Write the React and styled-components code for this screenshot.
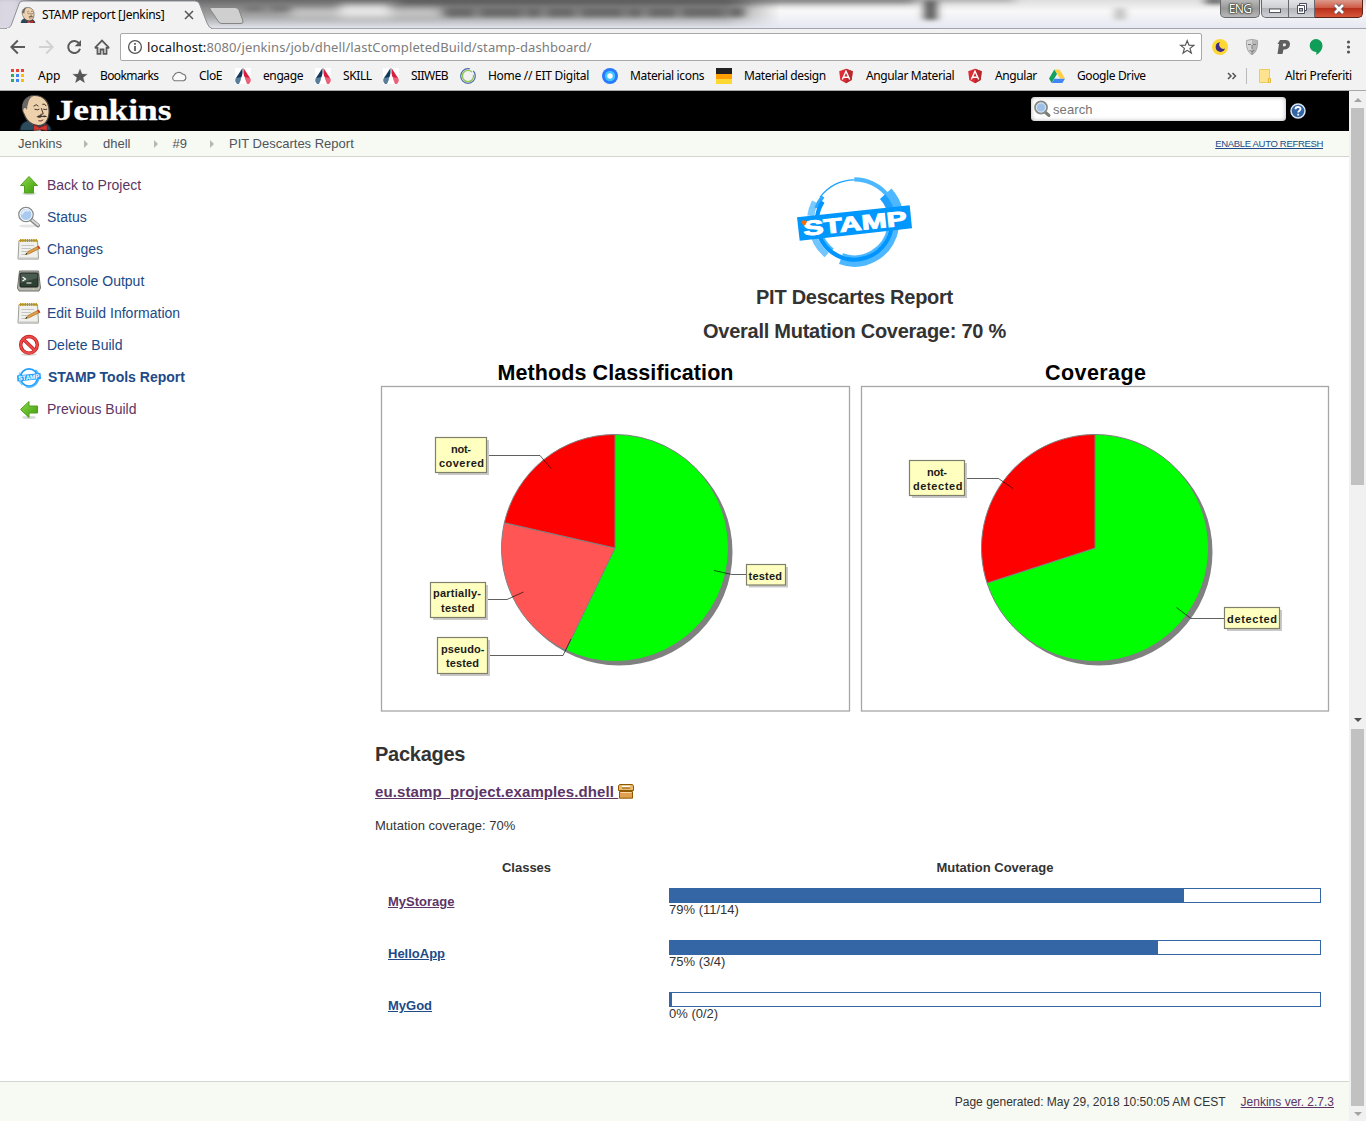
import React from 'react';
import styled, { createGlobalStyle } from 'styled-components';

const Global = createGlobalStyle`
  * { box-sizing: border-box; }
  html, body { margin: 0; padding: 0; }
  body {
    width: 1366px; height: 1121px; overflow: hidden; background: #fff; color: #333;
    font-family: "Liberation Sans", Arial, sans-serif; font-size: 13px;
  }
  svg { display: block; flex: none; }
`;

/* ---------- helpers ---------- */
const pt = (cx, cy, r, deg) => {
  const a = (deg * Math.PI) / 180;
  return [cx + r * Math.sin(a), cy - r * Math.cos(a)];
};
const arc = (cx, cy, r, a0, a1) => {
  const [x0, y0] = pt(cx, cy, r, a0);
  const [x1, y1] = pt(cx, cy, r, a1);
  return `M${x0} ${y0}A${r} ${r} 0 ${a1 - a0 > 180 ? 1 : 0} 1 ${x1} ${y1}`;
};

/* ---------- layout ---------- */
const Window = styled.div`
  display: flex; flex-direction: column; width: 1366px; height: 1121px;
`;
const UiFont = '"Noto Sans", "Open Sans", sans-serif';

const TitleBar = styled.div`
  position: relative; display: flex; height: 29px; padding-left: 6px;
  border-bottom: 1px solid #a2a4ae; background: #d8d9df;
`;
const Glass = styled.svg`
  position: absolute; left: 0; top: 0;
`;
const Tab = styled.div`
  position: relative; display: flex; align-items: center; width: 206px; height: 29px;
  padding: 0 0 0 14px; font-family: ${UiFont}; color: #000;
`;
const TabShape = styled.svg`
  position: absolute; left: 0; top: 0;
`;
const TabTitle = styled.span`
  position: relative; width: 140px; margin-left: 6px; font-size: 12px; white-space: nowrap;
  letter-spacing: ${(p) => p.$ls}px;
`;
const Above = styled.span`
  position: relative; display: flex;
`;
const WindowButtons = styled.div`
  position: relative; display: flex; margin-left: auto; padding-right: 3px; height: 18px;
`;
const Lang = styled.div`
  display: flex; align-items: center; justify-content: center; width: 40px; height: 18px; margin-right: 1px;
  border: 1px solid #66686a; border-top: 0; border-radius: 0 0 5px 5px;
  background: linear-gradient(#b9b9b9, #989898 50%, #b9b9b9); color: #fff;
  font: 12px ${UiFont}; letter-spacing: -0.7px; text-shadow: 0 0 2px #222, 0 0 2px #222, 0 0 1px #222;
`;
const WinBtn = styled.div`
  display: flex; align-items: center; justify-content: center; width: ${(p) => p.$w}px; height: 18px;
  border: 1px solid ${(p) => (p.$close ? '#5b2016' : '#66686e')}; border-top: 0; border-left-width: ${(p) => (p.$first ? 1 : 0)}px;
  border-radius: 0 0 ${(p) => (p.$close ? 5 : 0)}px ${(p) => (p.$first ? 5 : 0)}px;
  background: ${(p) => (p.$close
    ? 'linear-gradient(#dd9a8c, #cf5b45 45%, #b8301a 50%, #d8553a)'
    : 'linear-gradient(#e2e3e6, #cfd0d4 45%, #b3b4b9 50%, #d2d3d8)')};
`;

const Toolbar = styled.div`
  display: flex; align-items: center; height: 36px; padding: 0 0 0 10px; background: #f2f2f2;
`;
const NavIcons = styled.div`
  display: flex; gap: 12px; width: 110px;
`;
const Address = styled.div`
  display: flex; align-items: center; width: 1082px; height: 28px; padding: 0 6px;
  border: 1px solid #a9a9a9; border-radius: 2px; background: #fff; font-family: ${UiFont};
`;
const Url = styled.span`
  flex: 1; margin-left: 4px; font-size: 13px; color: #7c7c7c; letter-spacing: ${(p) => p.$ls}px; white-space: nowrap;
  b { font-weight: 400; color: #111; }
`;
const Extensions = styled.div`
  display: flex; align-items: center; gap: 16px; padding-left: 10px;
`;

const Bookmarks = styled.div`
  display: flex; align-items: center; height: 26px; padding: 0 0 4px 10px; background: #f2f2f2;
  border-bottom: 1px solid #a8a8a8; font: 12px ${UiFont}; color: #000;
`;
const Bookmark = styled.div`
  display: flex; align-items: center; gap: 12px; flex: none; width: ${(p) => p.$w}px; white-space: nowrap;
  letter-spacing: ${(p) => p.$ls}px;
`;
const Overflow = styled.span`
  width: 19px; margin-left: 61px;
`;
const Divider = styled.i`
  width: 1px; height: 16px; margin-right: 10px; background: #b9b9b9;
`;

const Viewport = styled.div`
  display: flex; flex: 1; height: 1030px;
`;
const Page = styled.div`
  display: flex; flex-direction: column; width: 1349px;
`;
const Header = styled.header`
  display: flex; justify-content: space-between; height: 40px; padding: 0 43px 0 18px; background: #000;
`;
const SearchArea = styled.div`
  display: flex; align-items: center; gap: 4px; padding-bottom: 4px;
`;
const SearchBox = styled.div`
  display: flex; align-items: center; width: 255px; height: 24px; padding-left: 2px;
  border-radius: 4px; background: #fff; box-shadow: inset 0 0 4px #aaa;
  color: #757575; font-size: 13px; letter-spacing: 0.1px;
`;
const Help = styled.span`
  padding-top: 3px;
`;
const Crumbs = styled.nav`
  display: flex; align-items: center; height: 26px; padding: 0 26px 1px 18px; background: #f6faf2;
  border-bottom: 1px solid #d3d7cf; font-size: 13px; color: #4d545d;
`;
const Crumb = styled.span`
  flex: none; width: ${(p) => p.$w}px; white-space: nowrap; letter-spacing: ${(p) => p.$ls || 0}px;
`;
const CrumbArrow = styled.i`
  width: 0; height: 0; margin: 1px 15px 0 0; border: 4px solid transparent; border-left-color: #b5b8b2; border-right-width: 0;
`;
const Refresh = styled.a`
  margin: 1px 0 0 auto; font-size: 9.5px; color: #204a87; text-decoration: underline; letter-spacing: ${(p) => p.$ls}px;
`;

const Body = styled.div`
  display: flex; flex: 1;
`;
const Side = styled.aside`
  display: flex; flex-direction: column; width: 375px; padding: 12px 0 0 17px;
`;
const Task = styled.a`
  display: flex; align-items: center; gap: ${(p) => (p.$active ? 7 : 6)}px; height: 32px; font-size: 14px;
  color: ${(p) => (p.$visited ? '#5c3566' : '#204a87')};
  font-weight: ${(p) => (p.$active ? 700 : 400)}; letter-spacing: ${(p) => p.$ls || 0}px;
`;
const Main = styled.main`
  display: flex; flex-direction: column; width: 960px; padding-top: 19px;
`;
const Brand = styled.div`
  display: flex; justify-content: center; height: 104px; padding-right: 1px;
`;
const Heading = styled.h2`
  margin: 0; height: 34px; line-height: 34px; font-size: 20px; text-align: ${(p) => (p.$left ? 'left' : 'center')};
  letter-spacing: -0.27px; padding-right: 1px;
`;
const Charts = styled.div`
  display: flex; height: 389px; padding-top: 7px;
`;
const PackageLink = styled.a`
  display: flex; align-items: center; height: 16px; margin-top: 12px; font-size: 15px; font-weight: 700; color: #5c3566;
  span { text-decoration: underline; letter-spacing: ${(p) => p.$ls}px; white-space: pre; }
`;
const Note = styled.p`
  margin: 19px 0 0; height: 16px; line-height: 16px; font-size: 13px; letter-spacing: ${(p) => p.$ls}px;
`;
const Table = styled.div`
  display: flex; flex-direction: column; padding-top: 26px;
`;
const Row = styled.div`
  display: grid; grid-template-columns: 281px 652px; padding-left: 13px; height: ${(p) => (p.$head ? 28 : 52)}px;
`;
const HeadCell = styled.b`
  line-height: 16px; text-align: center; letter-spacing: ${(p) => p.$ls}px; padding-right: ${(p) => p.$pr || 0}px;
`;
const ClassName = styled.a`
  padding-top: 6px; line-height: 15px; font-weight: 700; text-decoration: underline; color: ${(p) => (p.$visited ? '#5c3566' : '#204a87')};
  letter-spacing: ${(p) => p.$ls || 0}px;
`;
const Track = styled.div`
  height: 15px; border: 1px solid #3465a4; background: #fff;
`;
const Fill = styled.div`
  height: 13px; min-width: 2px; background: #3465a4;
`;
const Ratio = styled.div`
  height: 14px; line-height: 14px; letter-spacing: ${(p) => p.$ls || 0}px;
`;
const Footer = styled.footer`
  display: flex; justify-content: flex-end; align-items: center; gap: 15px; height: 40px; padding-right: 15px;
  border-top: 1px solid #d3d7cf; background: #f6faf2; font-size: 12px;
  a { color: #5c3566; text-decoration: underline; }
`;

const ScrollRail = styled.div`
  display: flex; flex-direction: column; align-items: center; width: 17px; background: #f1f1f1;
`;
const Thumb = styled.div`
  width: 13px; height: 377px; background: #c1c1c1;
`;
const ScrollArrow = styled.div`
  display: flex; align-items: center; justify-content: center; height: ${(p) => p.$h}px;
  &::after {
    content: ''; border: 4px solid transparent;
    ${(p) => (p.$up ? `border-bottom-color: ${p.$c}; border-top-width: 0;` : `border-top-color: ${p.$c}; border-bottom-width: 0;`)}
  }
`;
const RailGap = styled.div`
  height: 225px;
`;

/* ---------- drawings ---------- */
const Butler = ({ w, h, light }) => (
  <svg width={w} height={h} viewBox="0 0 34 37">
    <path d="M1 37 C1 31 5 28 9 27 L25 28 C30 30 33 33 33 37Z" fill="#2b4a5c" stroke="#0d1a22" strokeWidth="1" />
    <path d="M4 17 C2 8 7 1 16 1 C26 1 31 8 31 17 C31 26 27 32 20 32 C13 32 8 27 6 22Z" fill="#edd0ac" stroke={light ? '#333' : '#4a4440'} strokeWidth="1.2" />
    <path d="M4 17 C2 8 7 2 15 1.5 C9 4 10 9 8.500 12 C9 15 7 17 6.500 18 C4.500 19 4 19 4 17Z" fill="#6a6766" />
    <path d="M7 14 C3 13 4 20 8 21 L9 25 L11 20Z" fill="#edd0ac" />
    <path d="M15 12q3-3 5 0M24 10q3-1 4 2M16 15q3 1.500 5 0M25 15q2 1 4 0M23 14l2 6-3 .5" fill="none" stroke="#3b2d27" strokeWidth="1" />
    <path d="M18 23q4-3 6-1 3-1 5 1-3 1-5 0-3 2-6 0Z" fill="#38322e" />
    <path d="M20 27q3 1 5-1" stroke="#6b2a20" fill="none" />
    <path d="M15 37 L19 33 L23 37Z" fill="#fff" />
    <path d="M15 31l6 3 8-3v6l-8-1-6 1Z" fill="#d33833" stroke="#7b1512" strokeWidth=".8" />
  </svg>
);

const Wordmark = () => (
  <svg width="160" height="40" viewBox="0 0 160 40">
    <text x="37.500" y="28.500" fill="#fff" fontFamily='"Liberation Serif", serif' fontWeight="700" fontSize="30" textLength="116" lengthAdjust="spacingAndGlyphs" stroke="#fff" strokeWidth=".3">Jenkins</text>
  </svg>
);
const LogoRow = styled.div`
  display: flex; width: 160px;
`;
const ButlerSlot = styled.div`
  width: 34px; height: 40px; padding: 3px 0 0 1px;
  & + svg { margin-left: -34px; }
`;

const StampLogo = () => {
  const c = [854.3, 222];
  const p = (r, a, b) => arc(c[0], c[1], r, a, b);
  return (
    <svg width="115" height="92" viewBox="797 176 115 92" fill="none">
      <g stroke="#4db8ff">
        <path d={p(42.6, 0, 110)} strokeWidth="4.2" />
        <path d={p(41.8, 100, 200)} strokeWidth="6" />
        <path d={p(44, 278, 297)} strokeWidth="7" strokeOpacity=".75" />
        <path d={p(43, 220, 262)} strokeWidth="6" strokeOpacity=".8" />
        <path d={p(46.5, 48, 74)} strokeWidth="7" />
        <path d={p(34.5, 100, 200)} strokeWidth="2.4" />
        <path d={p(35, 218, 245)} strokeWidth="3" />
      </g>
      <path d={p(42.2, 306, 360)} stroke="#19a3ff" strokeWidth="1.2" />
      <path d={p(38, 48, 80)} stroke="#1e9fff" strokeWidth="7" />
      <path d={p(40.5, 290, 309)} stroke="#2fa9ff" strokeWidth="4" />
      <path d={p(37.6, 75, 303)} stroke="#0095ff" strokeWidth="4.2" />
      <path d="M797 217.3L909.7 205.3 912 228.3 799.7 240.7Z" fill="#0098ff" />
      <g transform="translate(804 235.8) rotate(-5.900)">
        <text x="0" y="0" fill="#fff" stroke="#fff" strokeWidth="1" fontFamily='"Liberation Sans", Arial, sans-serif' fontWeight="700" fontSize="20.500" textLength="104" lengthAdjust="spacingAndGlyphs">STAMP</text>
      </g>
      <path d="M801 221l4-.8 2 1.600-2 3.600-2-.5Z" fill="#ff6a00" />
    </svg>
  );
};
const StampIcon = () => (
  <svg width="24" height="24" viewBox="0 0 24 24" fill="none">
    <circle cx="12" cy="12.500" r="8.600" stroke="#1f9fff" strokeWidth="1.800" />
    <path d={arc(12, 12.5, 9.6, 90, 200)} stroke="#4db8ff" strokeWidth="1.600" />
    <path d={arc(12, 12.5, 10, 40, 75)} stroke="#4db8ff" strokeWidth="1.600" />
    <path d={arc(12, 12.5, 10.2, 220, 300)} stroke="#7ccaff" strokeWidth="1.300" />
    <path d="M0 10.500L23.500 8 24 14 .5 16.500Z" fill="#1b9cff" />
    <text x="1.500" y="15.600" transform="rotate(-5.500 1.500 15)" fill="#fff" fontFamily='"Liberation Sans", Arial, sans-serif' fontWeight="700" fontSize="6.500" textLength="21" lengthAdjust="spacingAndGlyphs">STAMP</text>
  </svg>
);

const GreenArrow = ({ left }) => (
  <svg width="24" height="24" viewBox="0 0 24 24">
    <defs>
      <linearGradient id="ga" x1="0" y1="0" x2="1" y2="1"><stop offset="0" stopColor="#8ddb4a" /><stop offset="1" stopColor="#3f9a0c" /></linearGradient>
    </defs>
    <ellipse cx="12" cy="20.500" rx="7" ry="1.600" fill="#000" opacity=".15" />
    <path d={left ? 'M3.500 12.500L12 4.500V9H20.500V16H12V20.500Z' : 'M12 3.500L20.500 12.500H16.500V20H7.500V12.500H3.500Z'} fill="url(#ga)" stroke="#4fa01d" strokeWidth="1" />
  </svg>
);
const Lens = ({ s = 24 }) => (
  <svg width={s} height={s} viewBox="0 0 24 24">
    <ellipse cx="11" cy="21" rx="9" ry="1.600" fill="#000" opacity=".1" />
    <path d="M14.500 15l6.500 5.500" stroke="#85878a" strokeWidth="4" strokeLinecap="round" />
    <path d="M15 15l6 5" stroke="#d8dad5" strokeWidth="2" strokeLinecap="round" />
    <circle cx="9" cy="9.500" r="7.200" fill="#a9c9ee" stroke="#888a85" strokeWidth="1.300" />
    <circle cx="9" cy="9.500" r="6" fill="none" stroke="#fff" strokeWidth="1" />
    <path d="M5 9.500A4.500 4.500 0 0 1 12 6" fill="none" stroke="#e2eefb" strokeWidth="2" />
  </svg>
);
const SearchLens = () => (
  <svg width="20" height="18" viewBox="0 0 20 18">
    <path d="M12.500 12.500L16 15.500" stroke="#7b7d78" strokeWidth="3" strokeLinecap="round" />
    <circle cx="8" cy="7.500" r="6" fill="#9fc0e6" stroke="#888a85" strokeWidth="1.800" />
    <circle cx="8" cy="7.500" r="4.600" fill="none" stroke="#dfeaf7" strokeWidth="1" />
  </svg>
);
const Notepad = () => (
  <svg width="24" height="24" viewBox="0 0 24 24">
    <path d="M2 3.500H20.500L21.500 22H1Z" fill="#f0f0ec" stroke="#9a9c97" />
    <path d="M1 20.500H21.500V22.500H1Z" fill="#c5c7c2" />
    <path d="M3 3.500H20" stroke="#b99312" strokeWidth="3" strokeDasharray="1.500 .7" />
    <path d="M4.500 8.500H17M4.500 11.500H14M4.500 14.500H11M4.500 17.500H9" stroke="#c3c5c0" />
    <path d="M8.500 17.500L11 14.500 21.500 9 23 11.300 12.500 16.500Z" fill="#e0a04a" stroke="#a5701c" strokeWidth=".7" />
    <path d="M20 9.600L21.500 8.800 23.300 11.200 21.800 12Z" fill="#d0402a" />
    <path d="M8.300 17.600l2-.4-1-1.100Z" fill="#222" />
  </svg>
);
const Terminal = () => (
  <svg width="24" height="24" viewBox="0 0 24 24">
    <path d="M2.500 2H21.500L23.500 19 22 22H2L.5 19Z" fill="#b5b7b0" stroke="#70726d" />
    <rect x="3" y="4" width="18" height="14" rx="1" fill="#2d4133" stroke="#1b1f1a" />
    <path d="M3.500 4.500H20.500V9L3.500 14Z" fill="#fff" opacity=".14" />
    <path d="M5.500 8L8.500 10 5.500 12M9.500 14H14.500" stroke="#fff" strokeWidth="1.200" fill="none" />
    <circle cx="16.500" cy="20.300" r=".8" fill="#d8e05c" />
  </svg>
);
const NoEntry = () => (
  <svg width="24" height="24" viewBox="0 0 24 24">
    <ellipse cx="12" cy="21.500" rx="8" ry="1.300" fill="#000" opacity=".15" />
    <circle cx="12" cy="11.800" r="8.300" fill="#fff" stroke="#c01818" strokeWidth="3.400" />
    <path d="M6.500 6.500L17.500 17" stroke="#c01818" strokeWidth="3.400" />
    <circle cx="12" cy="11.800" r="8.300" fill="none" stroke="#ea4a4a" strokeWidth="2" />
    <path d="M6.500 6.500L17.500 17" stroke="#ea4a4a" strokeWidth="2" />
  </svg>
);
const PackageIcon = () => (
  <svg width="16" height="15" viewBox="0 0 16 15">
    <path d="M1.500.5H14.500L15.500 2V6.500H.5V2Z" fill="#e9b96e" stroke="#8f5902" />
    <path d="M4 2.500H12" stroke="#fff" strokeWidth="1.500" />
    <path d="M4 4H12" stroke="#8f5902" />
    <path d="M1.500 7.500H14.500V14.200H1.500Z" fill="#e0a050" stroke="#8f5902" />
    <path d="M2.500 8.500H13.500" stroke="#f7d9a6" />
  </svg>
);

const Arrow = ({ flip, color }) => (
  <svg width="16" height="16" viewBox="0 0 16 16" fill="none" stroke={color} strokeWidth="2">
    <path d={flip ? 'M1 8H14M8.200 1.500L14.700 8 8.200 14.500' : 'M15 8H2M7.800 1.500L1.300 8 7.800 14.500'} />
  </svg>
);
const Reload = () => (
  <svg width="16" height="16" viewBox="0 0 16 16">
    <path d="M13.300 4.800A6 6 0 1 0 14 9.700" fill="none" stroke="#5a5a5a" strokeWidth="2" />
    <path d="M15 1V7.300H8.700Z" fill="#5a5a5a" />
  </svg>
);
const Home = () => (
  <svg width="16" height="16" viewBox="0 0 16 16" fill="none" stroke="#5a5a5a" strokeWidth="1.800">
    <path d="M3.500 8V14.800H6.500V10.500H9.500V14.800H12.500V8M.8 8.900H3.500M12.500 8.900H15.200M.9 8.800L8 1.600 15.100 8.800" />
  </svg>
);
const Info = () => (
  <svg width="16" height="16" viewBox="0 0 16 16">
    <circle cx="8" cy="8" r="6.400" fill="none" stroke="#555" strokeWidth="1.300" />
    <path d="M8 7V12M8 4V5.700" stroke="#555" strokeWidth="1.700" />
  </svg>
);
const starPath = 'M8 1L10 6 15.300 6.200 11.100 9.500 12.600 14.700 8 11.700 3.400 14.700 4.900 9.500 .7 6.200 6 6Z';
const Star = ({ solid }) => (
  <svg width="16" height="16" viewBox="0 0 16 16"><path d={starPath} fill={solid ? '#555' : 'none'} stroke="#555" strokeWidth={solid ? 0.2 : 1.3} transform={solid ? undefined : 'translate(1 .8) scale(.9)'} /></svg>
);
const Moon = () => (
  <svg width="16" height="16" viewBox="0 0 16 16"><circle cx="8" cy="8" r="8" fill="#fdd835" /><path d="M8 3.300A4.800 4.800 0 1 0 13 9.600 4.200 4.200 0 0 1 8 3.300Z" fill="#3b2a86" /></svg>
);
const Mask = () => (
  <svg width="16" height="16" viewBox="0 0 16 16">
    <path d="M2.500 1.500Q8-.8 13.500 1.500C14 8 12.500 13 8 16 3.500 13 2 8 2.500 1.500Z" fill="#d6d6d6" stroke="#999" strokeWidth=".8" />
    <path d="M4 5.500h3M9 5.500h3M8 6v4M5.500 11.500q2.500 1.500 5 0M8 12v3" stroke="#777" fill="none" /><path d="M8 1v14.500C12 13 13.500 8 13.300 2Z" fill="#888" opacity=".4" />
  </svg>
);
const LetterP = () => (
  <svg width="16" height="16" viewBox="0 0 16 16"><path fillRule="evenodd" d="M4 1H10C16 1 15 10.500 9 10.500H7.500L6.500 15H1.500L3 5H1.500ZM7.300 4.500L6.800 7.300H8.500C10.300 7.300 10.500 4.500 8.800 4.500Z" fill="#5f5f5f" /></svg>
);
const Balloon = () => (
  <svg width="16" height="16" viewBox="0 0 16 16"><path d="M8 0A6.500 6.500 0 0 1 14.500 6.500C14.500 11 11 14.500 8.300 16V13A6.500 6.500 0 0 1 8 0Z" fill="#0f9d58" /></svg>
);
const Dots = () => (
  <svg width="16" height="16" viewBox="0 0 16 16" fill="#555"><circle cx="8.500" cy="3" r="1.600" /><circle cx="8.500" cy="8" r="1.600" /><circle cx="8.500" cy="13" r="1.600" /></svg>
);

const icon16 = { width: 16, height: 16, viewBox: '0 0 16 16' };
const Apps = () => (
  <svg {...icon16}>
    {['#ea4335', '#ea4335', '#ea4335', '#34a853', '#4285f4', '#fbbc05', '#34a853', '#4285f4', '#fbbc05'].map((c, i) => (
      <rect key={i} x={1 + (i % 3) * 5} y={1 + Math.floor(i / 3) * 5} width="3" height="3" fill={c} />
    ))}
  </svg>
);
const Cloud = () => (
  <svg {...icon16}><path d="M3.500 12.800A3 3 0 0 1 3 7.500 5 4.600 0 0 1 11.500 6 3.500 3.500 0 0 1 12.500 12.800Z" fill="#fafafa" stroke="#777" strokeWidth="1.100" /></svg>
);
const Drop = () => (
  <svg {...icon16}>
    <rect width="16" height="16" fill="#fff" />
    <path d="M7.500 0V8L3 16C.5 15 .2 12 1 10Z" fill="#12375c" /><path d="M1 10L7 9 4 16C.5 16 0 13 1 10Z" fill="#5a7d99" />
    <path d="M8.500 0V8L13 16C15.500 15 15.800 12 15 10Z" fill="#d81e3f" /><path d="M15 10L9.500 9 12 16C15.500 16 16 13 15 10Z" fill="#e8627c" />
    <path d="M8 5L10.500 11.500H9.500V16H6.500V11.500H5.500Z" fill="#fff" />
  </svg>
);
const Ring = () => (
  <svg {...icon16} fill="none"><circle cx="8" cy="8" r="7.300" stroke="#4a68a8" strokeWidth="1.200" strokeDasharray="36 4" /><circle cx="8" cy="8" r="5.600" stroke="#8cc653" strokeWidth="1.400" strokeDasharray="30 3" /></svg>
);
const BlueDot = () => (
  <svg {...icon16}><circle cx="8" cy="8" r="8" fill="#2979ff" /><circle cx="8" cy="8" r="5.200" fill="#40c4ff" /><circle cx="8" cy="8" r="2.700" fill="#fff" /></svg>
);
const Stripes = () => (
  <svg {...icon16}><rect width="16" height="6" fill="#212121" /><rect y="6" width="16" height="5" fill="#ffa000" /><rect y="11" width="16" height="5" fill="#fdd835" /></svg>
);
const Shield = () => (
  <svg {...icon16}>
    <path d="M8 .8L14.800 3.200 13.700 12 8 15.200 2.300 12 1.200 3.200Z" fill="#dd2c33" /><path d="M8 .8L14.800 3.200 13.700 12 8 15.200Z" fill="#b8282d" />
    <path d="M4.300 11.500L8 3.300 11.700 11.500M5.700 9.200H10.300" fill="none" stroke="#fff" strokeWidth="1.400" />
  </svg>
);
const Drive = () => (
  <svg {...icon16}><path d="M5.500 1.500H10.500L16 10.500H10.800Z" fill="#ffcf3f" /><path d="M5.300 1.500L8 6.100 2.700 15 0 10.500Z" fill="#12a15e" /><path d="M5.400 10.700H16L13.300 15H2.800Z" fill="#4285f4" /></svg>
);
const Folder = () => (
  <svg {...icon16}><path d="M2.500 1.500H12.500V14.500H2.500Z" fill="#ffe38f" stroke="#eccb62" /><path d="M11.500 10.500H13.500V14.500H11.500Z" fill="#ffe38f" stroke="#e5bb3e" /></svg>
);

const GlassBackdrop = () => (
  <Glass width="1366" height="28" viewBox="0 0 1366 28">
    <defs>
      <linearGradient id="gl" x1="0" y1="0" x2="0" y2="1">
        <stop offset="0" stopColor="#6a6a6a" /><stop offset=".3" stopColor="#8c8c8c" /><stop offset=".6" stopColor="#a8a8aa" /><stop offset="1" stopColor="#e2e4ec" />
      </linearGradient>
      <linearGradient id="gr" x1="0" y1="0" x2="0" y2="1">
        <stop offset="0" stopColor="#dedede" /><stop offset=".4" stopColor="#f8f8f8" /><stop offset="1" stopColor="#e6e8f2" />
      </linearGradient>
      <linearGradient id="fade" x1="0" y1="0" x2="1" y2="0">
        <stop offset="0" stopColor="#fff" /><stop offset=".93" stopColor="#fff" /><stop offset="1" stopColor="#000" />
      </linearGradient>
      <mask id="fm"><rect width="780" height="28" fill="url(#fade)" /></mask>
      <filter id="b" x="-20%" y="-80%" width="140%" height="260%"><feGaussianBlur stdDeviation="6 3" /></filter>
      <filter id="bs" x="-20%" y="-80%" width="140%" height="260%"><feGaussianBlur stdDeviation="4 2" /></filter>
    </defs>
    <rect width="1366" height="28" fill="url(#gr)" />
    <rect width="780" height="28" fill="url(#gl)" mask="url(#fm)" />
    <g filter="url(#b)">
      <rect x="-10" y="-4" width="36" height="34" fill="#dad6e2" />
      <rect x="290" y="9" width="150" height="9" fill="#c6c6c6" />
      <rect x="340" y="5" width="50" height="13" fill="#e6e6e6" />
      <rect x="400" y="-2" width="350" height="6" fill="#585858" />
      <rect x="745" y="-4" width="170" height="7" fill="#6a6a6a" />
      <rect x="915" y="-5" width="100" height="6" fill="#999" />
    </g>
    <g filter="url(#bs)">
      <path d="M445 12H748" stroke="#6b6b6b" strokeWidth="10" strokeDasharray="30 4 44 3 16 4" />
      <path d="M245 8H290" stroke="#777" strokeWidth="6" strokeDasharray="18 8" />
      <rect x="924" y="0" width="13" height="20" fill="#5a5a5a" />
      <rect x="1115" y="8" width="10" height="12" fill="#bdbdbd" />
      <rect x="1205" y="-2" width="20" height="6" fill="#666" />
    </g>
  </Glass>
);

/* ---------- pie charts ---------- */
const PieChart = ({ title, titleWidth, frame = 469, slices, labels }) => {
  const cx = 240, cy = 193, r = 113.5;
  let a = 0;
  return (
    <svg width="480" height="369" viewBox="0 0 480 369" fontFamily='"Liberation Sans", Arial, sans-serif' fontWeight="700">
      <text x={240.5 - titleWidth / 2} y="24.500" fontSize="21.500" fill="#000" textLength={titleWidth} lengthAdjust="spacing">{title}</text>
      <rect x="6.500" y="31.500" width={frame - 1} height="324.500" fill="#fff" stroke="#a6a6a6" strokeWidth="1.300" />
      <circle cx={cx + 4} cy={cy + 4} r={r} fill="#808080" />
      {slices.map(([value, color]) => {
        const a0 = a;
        a += value * 360;
        const [x0, y0] = pt(cx, cy, r, a0);
        const [x1, y1] = pt(cx, cy, r, a);
        return <path key={color} d={`M${cx} ${cy}L${x0} ${y0}A${r} ${r} 0 ${value > 0.5 ? 1 : 0} 1 ${x1} ${y1}Z`} fill={color} stroke="#808080" strokeWidth="1" />;
      })}
      {labels.map((l) => (
        <g key={l.lines.join('')}>
          <path d={l.link} fill="none" stroke="#000" strokeOpacity=".62" strokeWidth="1" />
          <rect x={l.x + 2.500} y={l.y + 2.500} width={l.w} height={l.h} fill="#c9c9c9" />
          <rect x={l.x} y={l.y} width={l.w} height={l.h} fill="#ffffc0" stroke="#80806a" strokeWidth="1.200" />
          {l.lines.map(([t, x, y, w]) => (
            <text key={t} x={x} y={y} fontSize="11" fill="#1a1a1a" textLength={w} lengthAdjust="spacing">{t}</text>
          ))}
        </g>
      ))}
    </svg>
  );
};

const methodLabels = [
  { x: 60.5, y: 82.5, w: 51, h: 35, link: 'M112 100.500H165L176 113.500', lines: [['not-', 76, 98, 20], ['covered', 64, 112, 45]] },
  { x: 55.5, y: 227.5, w: 55, h: 35, link: 'M111 244.500H132L148.500 237', lines: [['partially-', 58, 241.5, 48], ['tested', 66, 257, 33.5]] },
  { x: 62.5, y: 282.5, w: 50, h: 36, link: 'M113 300.500H188L196 284', lines: [['pseudo-', 66, 298, 43.5], ['tested', 71, 312, 33]] },
  { x: 371.5, y: 209.5, w: 39, h: 20.5, link: 'M371 219.500H357L339 215.500', lines: [['tested', 373.5, 225, 33.5]] },
];
const coverageLabels = [
  { x: 54.5, y: 105.5, w: 55, h: 35, link: 'M110 123.500H143.500L158 133.500', lines: [['not-', 72, 121, 20], ['detected', 58, 135, 49.5]] },
  { x: 369.5, y: 252.5, w: 55, h: 21, link: 'M369 263.500H336L321.500 252.500', lines: [['detected', 372, 268, 50]] },
];

const bookmarks = [
  ['App', Apps, 62, 0], ['Bookmarks', Star, 99, -0.6], ['CloE', Cloud, 64, -0.4], ['engage', Drop, 80, -0.4],
  ['SKILL', Drop, 68, -0.4], ['SIIWEB', Drop, 77, -0.55], ['Home // EIT Digital', Ring, 142, -0.28],
  ['Material icons', BlueDot, 114, -0.35], ['Material design', Stripes, 122, -0.38],
  ['Angular Material', Shield, 129, -0.38], ['Angular', Shield, 82, -0.4], ['Google Drive', Drive, 117, -0.38],
];
const tasks = [
  ['Back to Project', <GreenArrow />, { $visited: true }],
  ['Status', <Lens />],
  ['Changes', <Notepad />],
  ['Console Output', <Terminal />],
  ['Edit Build Information', <Notepad />],
  ['Delete Build', <NoEntry />],
  ['STAMP Tools Report', <StampIcon />, { $active: true }],
  ['Previous Build', <GreenArrow left />, { $visited: true }],
];
const classes = [
  ['MyStorage', 79, '(11/14)', true], ['HelloApp', 75, '(3/4)', false], ['MyGod', 0, '(0/2)', false],
];

export default function App() {
  return (
    <Window>
      <Global />
      <TitleBar>
        <GlassBackdrop />
        <Tab>
          <TabShape width="240" height="29" viewBox="0 0 240 29">
            <path d="M0 28.500C4 28 5 26 6 23L13 4Q14 1 17 1H189Q192 1 193.500 4L201 23Q203 28 206 28.500V29H0Z" fill="#f2f2f2" stroke="#8e9098" />
            <rect y="28" x="1" width="204" height="1" fill="#f2f2f2" />
            <path d="M205 7.500H229Q232 7.500 233 10L237 21Q237.500 23.500 235 23.500H216Q213 23.500 212 21L204 9Q203.500 7.500 205 7.500Z" fill="#cfcfcf" stroke="#858585" />
          </TabShape>
          <Above><Butler w={16} h={16} light /></Above>
          <TabTitle $ls={-0.3}>STAMP report [Jenkins]</TabTitle>
          <Above><svg width="12" height="12" viewBox="0 0 12 12"><path d="M3 2L11 10M11 2L3 10" stroke="#555" strokeWidth="1.500" /></svg></Above>
        </Tab>
        <WindowButtons>
          <Lang>ENG</Lang>
          <WinBtn $w={28} $first><svg width="14" height="10" viewBox="0 0 14 10"><rect x="1.500" y="5" width="11" height="3.500" fill="#fff" stroke="#55575f" /></svg></WinBtn>
          <WinBtn $w={26}><svg width="12" height="13" viewBox="0 0 12 13"><path d="M3.500 1.500H10.500V8.500H3.500Z" fill="#fff" stroke="#4a4d5c" /><path d="M1.500 3.500H8.500V11.500H1.500Z" fill="#fff" stroke="#4a4d5c" /><rect x="3.500" y="6.500" width="3" height="2.500" fill="#bbb" stroke="#4a4d5c" /></svg></WinBtn>
          <WinBtn $w={48} $close><svg width="14" height="12" viewBox="0 0 14 12"><path d="M3 2L11 10M11 2L3 10" stroke="#5d5360" strokeWidth="4.500" /><path d="M3 2L11 10M11 2L3 10" stroke="#fff" strokeWidth="2.700" /></svg></WinBtn>
        </WindowButtons>
      </TitleBar>
      <Toolbar>
        <NavIcons><Arrow color="#5a5a5a" /><Arrow flip color="#d2d2d2" /><Reload /><Home /></NavIcons>
        <Address>
          <Info />
          <Url $ls={0.1}><b>localhost:</b>8080/jenkins/job/dhell/lastCompletedBuild/stamp-dashboard/</Url>
          <Star />
        </Address>
        <Extensions><Moon /><Mask /><LetterP /><Balloon /><Dots /></Extensions>
      </Toolbar>
      <Bookmarks>
        {bookmarks.map(([label, Icon, w, ls]) => (
          <Bookmark key={label} $w={w} $ls={ls}><Icon solid />{label}</Bookmark>
        ))}
        <Overflow><svg width="10" height="10" viewBox="0 0 10 10"><path d="M1 2L4 5 1 8M5.500 2L8.500 5 5.500 8" fill="none" stroke="#555" strokeWidth="1.500" /></svg></Overflow>
        <Divider />
        <Bookmark $w={94} $ls={-0.3}><Folder />Altri Preferiti</Bookmark>
      </Bookmarks>
      <Viewport>
        <Page>
          <Header>
            <LogoRow><ButlerSlot><Butler w={33} h={37} /></ButlerSlot><Wordmark /></LogoRow>
            <SearchArea>
              <SearchBox><SearchLens />search</SearchBox>
              <Help>
                <svg width="16" height="16" viewBox="0 0 16 16">
                  <circle cx="8" cy="8" r="7" fill="#3465a4" stroke="#dbe6f5" strokeWidth="1.500" />
                  <path d="M5.500 6.200C5.500 3.300 10.500 3.300 10.500 6 10.500 7.800 8.200 7.700 8.200 9.600M8.200 10.700V12.400" fill="none" stroke="#fff" strokeWidth="1.800" />
                </svg>
              </Help>
            </SearchArea>
          </Header>
          <Crumbs>
            <Crumb $w={66}>Jenkins</Crumb><CrumbArrow />
            <Crumb $w={50.5}>dhell</Crumb><CrumbArrow />
            <Crumb $w={37.5}>#9</Crumb><CrumbArrow />
            <Crumb $w={140}>PIT Descartes Report</Crumb>
            <Refresh $ls={-0.32}>ENABLE AUTO REFRESH</Refresh>
          </Crumbs>
          <Body>
            <Side>
              {tasks.map(([label, icon, state]) => (
                <Task key={label} {...state}>{icon}{label}</Task>
              ))}
            </Side>
            <Main>
              <Brand><StampLogo /></Brand>
              <Heading>PIT Descartes Report</Heading>
              <Heading>Overall Mutation Coverage: 70 %</Heading>
              <Charts>
                <PieChart title="Methods Classification" titleWidth={236} labels={methodLabels}
                  slices={[[8 / 14, '#00ff00'], [3 / 14, '#ff5555'], [3 / 14, '#ff0000']]} />
                <PieChart title="Coverage" titleWidth={101} frame={468} labels={coverageLabels}
                  slices={[[0.7, '#00ff00'], [0.3, '#ff0000']]} />
              </Charts>
              <Heading $left>Packages</Heading>
              <PackageLink $ls={0.1}><span>eu.stamp_project.examples.dhell </span><PackageIcon /></PackageLink>
              <Note $ls={0}>Mutation coverage: 70%</Note>
              <Table>
                <Row $head><HeadCell $ls={0} $pr={4}>Classes</HeadCell><HeadCell $ls={0}>Mutation Coverage</HeadCell></Row>
                {classes.map(([name, pct, ratio, visited]) => (
                  <Row key={name}>
                    <div><ClassName as="div" $visited={visited}>{name}</ClassName></div>
                    <div>
                      <Track><Fill style={{ width: `${pct}%` }} /></Track>
                      <Ratio>{pct}% {ratio}</Ratio>
                    </div>
                  </Row>
                ))}
              </Table>
            </Main>
          </Body>
          <Footer>
            <span>Page generated: May 29, 2018 10:50:05 AM CEST</span>
            <a>Jenkins ver. 2.7.3</a>
          </Footer>
        </Page>
        <ScrollRail>
          <ScrollArrow $h={17} $up $c="#a3a3a3" />
          <Thumb />
          <RailGap />
          <ScrollArrow $h={19} $c="#505050" />
          <Thumb />
          <ScrollArrow $h={15} $c="#a3a3a3" />
        </ScrollRail>
      </Viewport>
    </Window>
  );
}
